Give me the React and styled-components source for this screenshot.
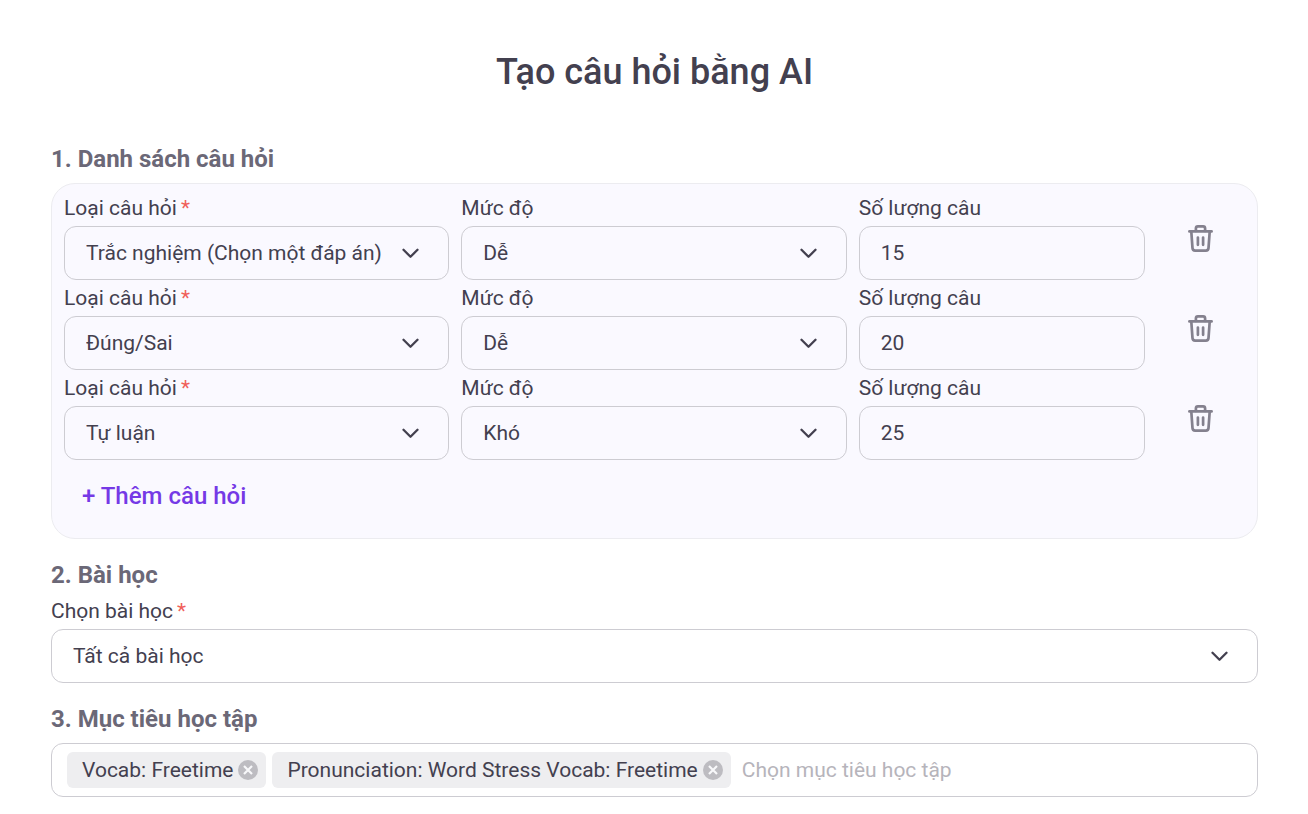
import React, { useState } from "react";
import styled, { createGlobalStyle } from "styled-components";

const Theme = {
  text: "#43404f",
  heading: "#6b6877",
  border: "#cdccd2",
  panel: "#faf9ff",
  panelBorder: "#ececf0",
  primary: "#7539e6",
  danger: "#f0605a",
  icon: "#84818e",
  chip: "#eeeef0",
  chipIcon: "#bdbcc1",
  placeholder: "#b6b4bb",
};

const GlobalStyle = createGlobalStyle`
  * {
    box-sizing: border-box;
  }

  body {
    margin: 0;
    background-color: #ffffff;
    color: ${Theme.text};
    font-family: Roboto, "Liberation Sans", sans-serif;
    font-size: 21px;
    line-height: 24px;
  }

  button,
  input,
  select {
    margin: 0;
    color: inherit;
    font: inherit;
  }
`;

const Page = styled.form`
  padding: 48px 50px 16px 51px;
`;

const Title = styled.h1`
  margin: 0 0 48px;
  font-size: 36px;
  font-weight: 500;
  line-height: 48px;
  text-align: center;
`;

const Section = styled.section`
  margin-bottom: 21px;
`;

const SectionTitle = styled.h2`
  display: block;
  margin: 0;
  padding-bottom: 9px;
  color: ${Theme.heading};
  font-size: 24px;
  font-weight: 700;
  line-height: 30px;
`;

const Panel = styled.div`
  display: flex;
  flex-direction: column;
  gap: 6px;
  padding: 12px 13px 12px 12px;
  background-color: ${Theme.panel};
  border: 1px solid ${Theme.panelBorder};
  border-radius: 24px;
`;

const QuestionRow = styled.div`
  display: grid;
  grid-template-columns: repeat(12, minmax(0, 1fr));
  column-gap: 12px;
`;

const Field = styled.div`
  display: flex;
  flex-direction: column;
  gap: 6px;
  grid-column: span ${(props) => props.$span || 12};
`;

const Label = styled.label`
  line-height: 24px;
`;

const Required = styled.span`
  margin-left: 4px;
  color: ${Theme.danger};
`;

const SelectBox = styled.div`
  display: grid;
  align-items: center;

  > * {
    grid-area: 1 / 1;
  }

  svg {
    justify-self: end;
    margin-right: 30px;
    pointer-events: none;
  }
`;

const Select = styled.select`
  width: 100%;
  height: 54px;
  padding: 0 60px 0 21px;
  appearance: none;
  background-color: transparent;
  border: 1px solid ${Theme.border};
  border-radius: 12px;
  outline: none;
`;

const NumberInput = styled.input`
  width: 100%;
  height: 54px;
  padding: 0 21px;
  background-color: transparent;
  border: 1px solid ${Theme.border};
  border-radius: 12px;
  outline: none;
`;

const IconButton = styled.button`
  display: flex;
  align-self: center;
  justify-self: center;
  padding: ${(props) => (props.$low ? "2px 0 0" : "0")};
  background: none;
  border: 0;
  color: ${Theme.icon};

  &:hover {
    cursor: pointer;
  }
`;

const AddButton = styled.button`
  align-self: flex-start;
  padding: 15px 18px;
  background: none;
  border: 0;
  color: ${Theme.primary};
  font-size: 24px;
  font-weight: 500;
  line-height: 30px;

  &:hover {
    cursor: pointer;
  }
`;

const TagBox = styled.div`
  display: flex;
  align-items: center;
  gap: 6px;
  min-height: 54px;
  padding: 8px 15px;
  border: 1px solid ${Theme.border};
  border-radius: 12px;
`;

const Tag = styled.span`
  display: flex;
  align-items: center;
  gap: 5px;
  height: 36px;
  padding: 0 8px 0 15px;
  background-color: ${Theme.chip};
  border-radius: 6px;
  white-space: nowrap;
`;

const TagRemove = styled(IconButton)`
  color: ${Theme.chipIcon};
`;

const TagInput = styled.input`
  flex: 1;
  min-width: 0;
  padding: 0 5px;
  background: none;
  border: 0;
  outline: none;

  &::placeholder {
    color: ${Theme.placeholder};
    opacity: 1;
  }
`;

const ChevronIcon = () => (
  <svg width="17" height="11" viewBox="0 0 17 11" fill="none">
    <path
      d="M1.5 1.8l7 7 7-7"
      stroke={Theme.text}
      strokeWidth="2.3"
      strokeLinecap="round"
      strokeLinejoin="round"
    />
  </svg>
);

const TrashIcon = () => (
  <svg
    width="26"
    height="28"
    viewBox="0 0 26 28"
    fill="none"
    stroke="currentColor"
    strokeWidth="2.7"
    strokeLinecap="round"
    strokeLinejoin="round"
  >
    <path d="M2.4 6.4h22.2" />
    <path d="M8.9 6V3.4c0-1.200.8-2 2-2h5.200c1.200 0 2 .8 2 2V6" />
    <path d="M4.300 6.600l1.200 16.600c.1 1.600 1 2.400 2.600 2.400h10.800c1.600 0 2.500-.8 2.600-2.400l1.200-16.600" />
    <path d="M10.900 12.600v7.200M16.100 12.600v7.200" />
  </svg>
);

const RemoveIcon = () => (
  <svg width="20" height="20" viewBox="0 0 20 20" fill="none">
    <circle cx="10" cy="10" r="10" fill="currentColor" />
    <path d="M6 6l8 8M14 6l-8 8" stroke="#f8f8fa" strokeWidth="2.2" />
  </svg>
);

const questionTypes = ["Trắc nghiệm (Chọn một đáp án)", "Đúng/Sai", "Tự luận"];
const levels = ["Dễ", "Khó"];

const SelectField = (props) => (
  <Field $span={props.span}>
    <Label htmlFor={props.id}>
      {props.label}
      {props.required && <Required>*</Required>}
    </Label>
    <SelectBox>
      <Select id={props.id} value={props.value} onChange={props.onChange}>
        {props.options.map((option) => (
          <option key={option}>{option}</option>
        ))}
      </Select>
      <ChevronIcon />
    </SelectBox>
  </Field>
);

const Question = ({ question, onChange, onDelete }) => {
  const update = (key) => (event) =>
    onChange({ ...question, [key]: event.target.value });

  return (
    <QuestionRow>
      <SelectField
        id={`type-${question.id}`}
        label="Loại câu hỏi"
        required
        span={4}
        options={questionTypes}
        value={question.type}
        onChange={update("type")}
      />
      <SelectField
        id={`level-${question.id}`}
        label="Mức độ"
        span={4}
        options={levels}
        value={question.level}
        onChange={update("level")}
      />
      <Field $span={3}>
        <Label htmlFor={`count-${question.id}`}>Số lượng câu</Label>
        <NumberInput
          id={`count-${question.id}`}
          type="text"
          inputMode="numeric"
          value={question.count}
          onChange={update("count")}
        />
      </Field>
      <IconButton
        $low
        type="button"
        aria-label="Xóa câu hỏi"
        onClick={onDelete}
      >
        <TrashIcon />
      </IconButton>
    </QuestionRow>
  );
};

const App = () => {
  const [questions, setQuestions] = useState([
    { id: 1, type: questionTypes[0], level: "Dễ", count: "15" },
    { id: 2, type: questionTypes[1], level: "Dễ", count: "20" },
    { id: 3, type: questionTypes[2], level: "Khó", count: "25" },
  ]);
  const [lesson, setLesson] = useState("Tất cả bài học");
  const [goals, setGoals] = useState([
    "Vocab: Freetime",
    "Pronunciation: Word Stress Vocab: Freetime",
  ]);

  const changeQuestion = (next) => {
    setQuestions((prev) => prev.map((q) => (q.id === next.id ? next : q)));
  };

  const addQuestion = () => {
    setQuestions((prev) => [
      ...prev,
      { id: Date.now(), type: questionTypes[0], level: "Dễ", count: "10" },
    ]);
  };

  return (
    <Page>
      <GlobalStyle />
      <Title>Tạo câu hỏi bằng AI</Title>

      <Section>
        <SectionTitle>1. Danh sách câu hỏi</SectionTitle>
        <Panel>
          {questions.map((question) => (
            <Question
              key={question.id}
              question={question}
              onChange={changeQuestion}
              onDelete={() =>
                setQuestions((prev) => prev.filter((q) => q.id !== question.id))
              }
            />
          ))}
          <AddButton type="button" onClick={addQuestion}>
            + Thêm câu hỏi
          </AddButton>
        </Panel>
      </Section>

      <Section>
        <SectionTitle>2. Bài học</SectionTitle>
        <SelectField
          id="lesson"
          label="Chọn bài học"
          required
          options={["Tất cả bài học"]}
          value={lesson}
          onChange={(event) => setLesson(event.target.value)}
        />
      </Section>

      <SectionTitle as="label" htmlFor="goals">
        3. Mục tiêu học tập
      </SectionTitle>
      <TagBox>
        {goals.map((goal) => (
          <Tag key={goal}>
            {goal}
            <TagRemove
              type="button"
              aria-label={`Bỏ ${goal}`}
              onClick={() => setGoals((prev) => prev.filter((g) => g !== goal))}
            >
              <RemoveIcon />
            </TagRemove>
          </Tag>
        ))}
        <TagInput id="goals" type="text" placeholder="Chọn mục tiêu học tập" />
      </TagBox>
    </Page>
  );
};

export default App;
